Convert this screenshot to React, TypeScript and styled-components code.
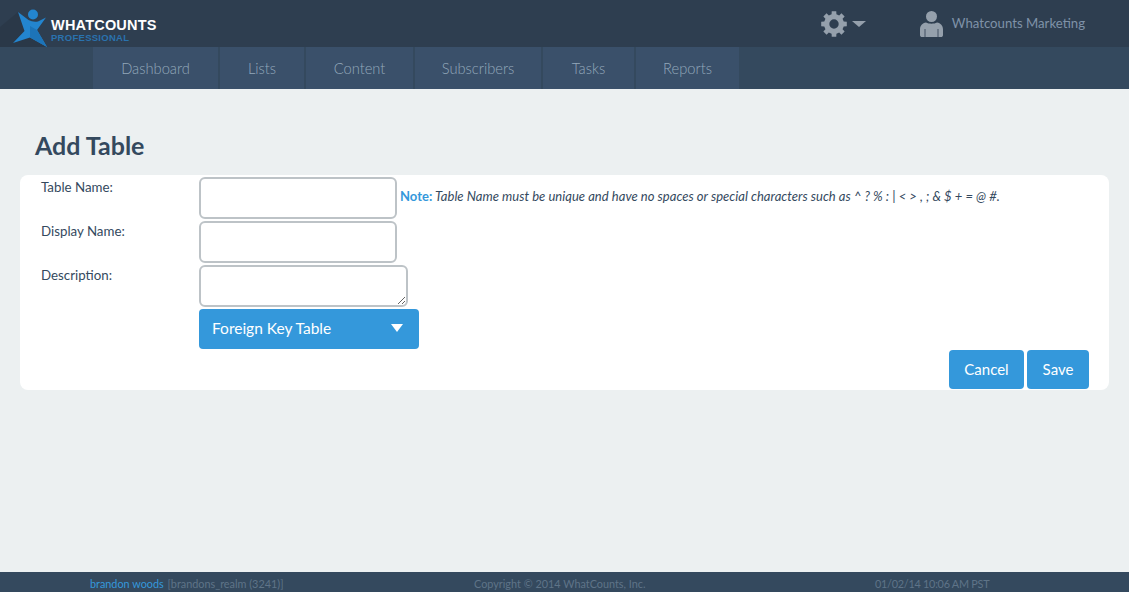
import styled, { createGlobalStyle } from 'styled-components'

const GlobalStyle = createGlobalStyle`
  html, body {
    margin: 0;
    padding: 0;
    background: #fff;
  }
  * {
    box-sizing: border-box;
  }
`

const Page = styled.div`
  width: 1129px;
  height: 592px;
  display: flex;
  flex-direction: column;
  background: #ecf0f1;
  font-family: Lato, 'Liberation Sans', sans-serif;
  color: #34495e;
`

const TopBar = styled.header`
  position: relative;
  height: 47px;
  flex: none;
  display: flex;
  align-items: center;
  overflow: hidden;
  background: #2e3e50;
`

const LogoMark = styled.svg`
  width: 60px;
  height: 47px;
  flex: none;
  margin-right: -9px;
`

const Brand = styled.div`
  display: flex;
  flex-direction: column;
  padding-top: 14px;
  font-family: 'Liberation Sans', Arial, sans-serif;
  font-weight: 700;
`

const BrandName = styled.span`
  font-size: 14.5px;
  line-height: 15px;
  letter-spacing: 0.2px;
  color: #fff;
`

const BrandSub = styled.span`
  margin-top: -1px;
  font-size: 9.5px;
  line-height: 11px;
  letter-spacing: 0.28px;
  color: #2a72ae;
`

const TopActions = styled.div`
  margin-left: auto;
  display: flex;
  align-items: center;
  padding-right: 44px;
`

const SettingsMenu = styled.div`
  display: flex;
  align-items: center;
  gap: 5px;
  margin-right: 54px;
`

const Caret = styled.span<{ $half: number; $height: number; $color: string }>`
  width: 0;
  height: 0;
  border-left: ${({ $half }) => $half}px solid transparent;
  border-right: ${({ $half }) => $half}px solid transparent;
  border-top: ${({ $height }) => $height}px solid ${({ $color }) => $color};
`

const Account = styled.div`
  display: flex;
  align-items: center;
  gap: 9px;
  font-size: 13.2px;
  color: #7f92a8;
`

const AccountName = styled.span`
  padding-bottom: 2px;
`

const NavBar = styled.nav`
  height: 42px;
  flex: none;
  display: flex;
  gap: 2px;
  padding-left: 93px;
  background: #34495e;
`

const NavItem = styled.a<{ $width: number }>`
  width: ${({ $width }) => $width}px;
  padding-bottom: 1px;
  display: flex;
  align-items: center;
  justify-content: center;
  background: #3a506a;
  font-size: 14.7px;
  font-weight: 300;
  color: #93a8ba;
`

const Main = styled.main`
  flex: 1;
  padding: 39px 20px 0;
`

const Title = styled.h1`
  margin: 0 0 13px 15px;
  font-size: 25px;
  line-height: 34px;
  font-weight: 700;
  color: #34495e;
`

const Card = styled.section`
  width: 1089px;
  height: 215px;
  padding: 2px 20px 0 21px;
  background: #fff;
  border-radius: 8px;
`

const FormRow = styled.div`
  display: flex;
  align-items: flex-start;
  margin-bottom: 2px;
`

const FieldLabel = styled.label`
  width: 158px;
  flex: none;
  font-size: 13.3px;
  line-height: 20px;
  color: #34495e;
`

const TextInput = styled.input`
  width: 198px;
  height: 42px;
  flex: none;
  padding: 0 10px;
  background: #fff;
  border: 2px solid #bdc3c7;
  border-radius: 6px;
  outline: none;
`

const TextArea = styled.textarea`
  display: block;
  width: 209px;
  height: 42px;
  flex: none;
  margin: 0;
  padding: 4px 10px;
  background: #fff;
  border: 2px solid #bdc3c7;
  border-radius: 6px;
  outline: none;
`

const Note = styled.p`
  margin: 10px 0 0 3px;
  font-size: 13px;
  line-height: 18px;
  letter-spacing: 0.035px;
  font-style: italic;
  color: #34495e;
  white-space: nowrap;
`

const NoteLead = styled.strong`
  font-style: normal;
  font-weight: 700;
  color: #3498db;
`

const SelectButton = styled.button`
  width: 220px;
  height: 40px;
  margin-left: 158px;
  padding: 0 16px 2px 13px;
  display: flex;
  align-items: center;
  justify-content: space-between;
  background: #3498db;
  border: none;
  border-radius: 4px;
  font-family: inherit;
  font-size: 15.5px;
  color: #fff;
`

const Actions = styled.div`
  display: flex;
  justify-content: flex-end;
  gap: 3px;
  margin-top: 1px;
`

const ActionButton = styled.button<{ $width: number }>`
  width: ${({ $width }) => $width}px;
  height: 39px;
  padding: 0 0 2px;
  background: #3498db;
  border: none;
  border-radius: 4px;
  font-family: inherit;
  font-size: 15px;
  color: #fff;
`

const Footer = styled.footer`
  height: 20px;
  flex: none;
  padding-top: 3px;
  display: flex;
  align-items: center;
  background: #34495e;
  font-size: 10.85px;
  color: #5f7488;
  white-space: nowrap;
`

const FooterUser = styled.div`
  width: 384px;
  padding-left: 90px;
`

const UserName = styled.span`
  margin-right: 1px;
  color: #3498db;
`

const FooterCopy = styled.div`
  width: 401px;
  margin-left: 90px;
`

const FooterDate = styled.div`
  letter-spacing: -0.25px;
`

const tabs = [
  { label: 'Dashboard', width: 125 },
  { label: 'Lists', width: 84 },
  { label: 'Content', width: 107 },
  { label: 'Subscribers', width: 126 },
  { label: 'Tasks', width: 91 },
  { label: 'Reports', width: 103 },
]

// eight chunky teeth, centred on 13,13
function gearPath() {
  const point = (deg: number, r: number) => {
    const rad = (deg * Math.PI) / 180
    return `${(13 + r * Math.cos(rad)).toFixed(2)} ${(13 + r * Math.sin(rad)).toFixed(2)}`
  }
  let d = ''
  for (let i = 0; i < 8; i++) {
    const a = i * 45 - 90
    d += `${i === 0 ? 'M' : 'L'}${point(a - 14, 10)}L${point(a - 10, 13)}L${point(a + 10, 13)}L${point(a + 14, 10)}`
  }
  return `${d}ZM13 8.300a4.700 4.700 0 1 0 0 9.400 4.700 4.700 0 0 0 0-9.400Z`
}

export default function App() {
  return (
    <>
      <GlobalStyle />
      <Page>
        <TopBar>
          <LogoMark viewBox="0 0 60 47">
            <path d="M0 27 18 12 47 47H0Z" fill="#2a3848" />
            <circle cx="33" cy="14.500" r="5" fill="#2385cf" />
            <path d="M18 12 28.500 20Q33 22.500 38 21.500L46 17.500 37 30 47 47 30 37.500 13 43 24.500 31Z" fill="#2385cf" />
            <path d="M30 26 37 30 47 47 30 37.500Z" fill="#1d74b8" />
          </LogoMark>
          <Brand>
            <BrandName>WHATCOUNTS</BrandName>
            <BrandSub>PROFESSIONAL</BrandSub>
          </Brand>
          <TopActions>
            <SettingsMenu>
              <svg width="26" height="26" viewBox="0 0 26 26">
                <path fill="#95a0ac" fillRule="evenodd" d={gearPath()} />
              </svg>
              <Caret $half={7} $height={6} $color="#95a0ac" />
            </SettingsMenu>
            <Account>
              <svg width="23" height="26" viewBox="0 0 23 26">
                <circle cx="11.500" cy="5.500" r="5.500" fill="#95a0ac" />
                <path
                  fill="#95a0ac"
                  d="M6 11.500c3 1.600 8 1.600 11 0 3.600.6 6 3 6 7V24c0 1.400-1 2-2 2H2c-1 0-2-.6-2-2v-5.500c0-4 2.400-6.400 6-7Z"
                />
                <path stroke="#2e3e50" strokeWidth="0.8" d="M5 18v8M18 18v8" />
              </svg>
              <AccountName>Whatcounts Marketing</AccountName>
            </Account>
          </TopActions>
        </TopBar>
        <NavBar>
          {tabs.map((tab) => (
            <NavItem key={tab.label} $width={tab.width}>
              {tab.label}
            </NavItem>
          ))}
        </NavBar>
        <Main>
          <Title>Add Table</Title>
          <Card>
            <FormRow>
              <FieldLabel>Table Name:</FieldLabel>
              <TextInput />
              <Note>
                <NoteLead>Note:</NoteLead> Table Name must be unique and have no spaces or special
                characters such as ^ ? % : | &lt; &gt; , ; &amp; $ + = @ #.
              </Note>
            </FormRow>
            <FormRow>
              <FieldLabel>Display Name:</FieldLabel>
              <TextInput />
            </FormRow>
            <FormRow>
              <FieldLabel>Description:</FieldLabel>
              <TextArea />
            </FormRow>
            <SelectButton>
              Foreign Key Table
              <Caret $half={6} $height={8} $color="#fff" />
            </SelectButton>
            <Actions>
              <ActionButton $width={75}>Cancel</ActionButton>
              <ActionButton $width={62}>Save</ActionButton>
            </Actions>
          </Card>
        </Main>
        <Footer>
          <FooterUser>
            <UserName>brandon woods</UserName> [brandons_realm (3241)]
          </FooterUser>
          <FooterCopy>Copyright © 2014 WhatCounts, Inc.</FooterCopy>
          <FooterDate>01/02/14 10:06 AM PST</FooterDate>
        </Footer>
      </Page>
    </>
  )
}
